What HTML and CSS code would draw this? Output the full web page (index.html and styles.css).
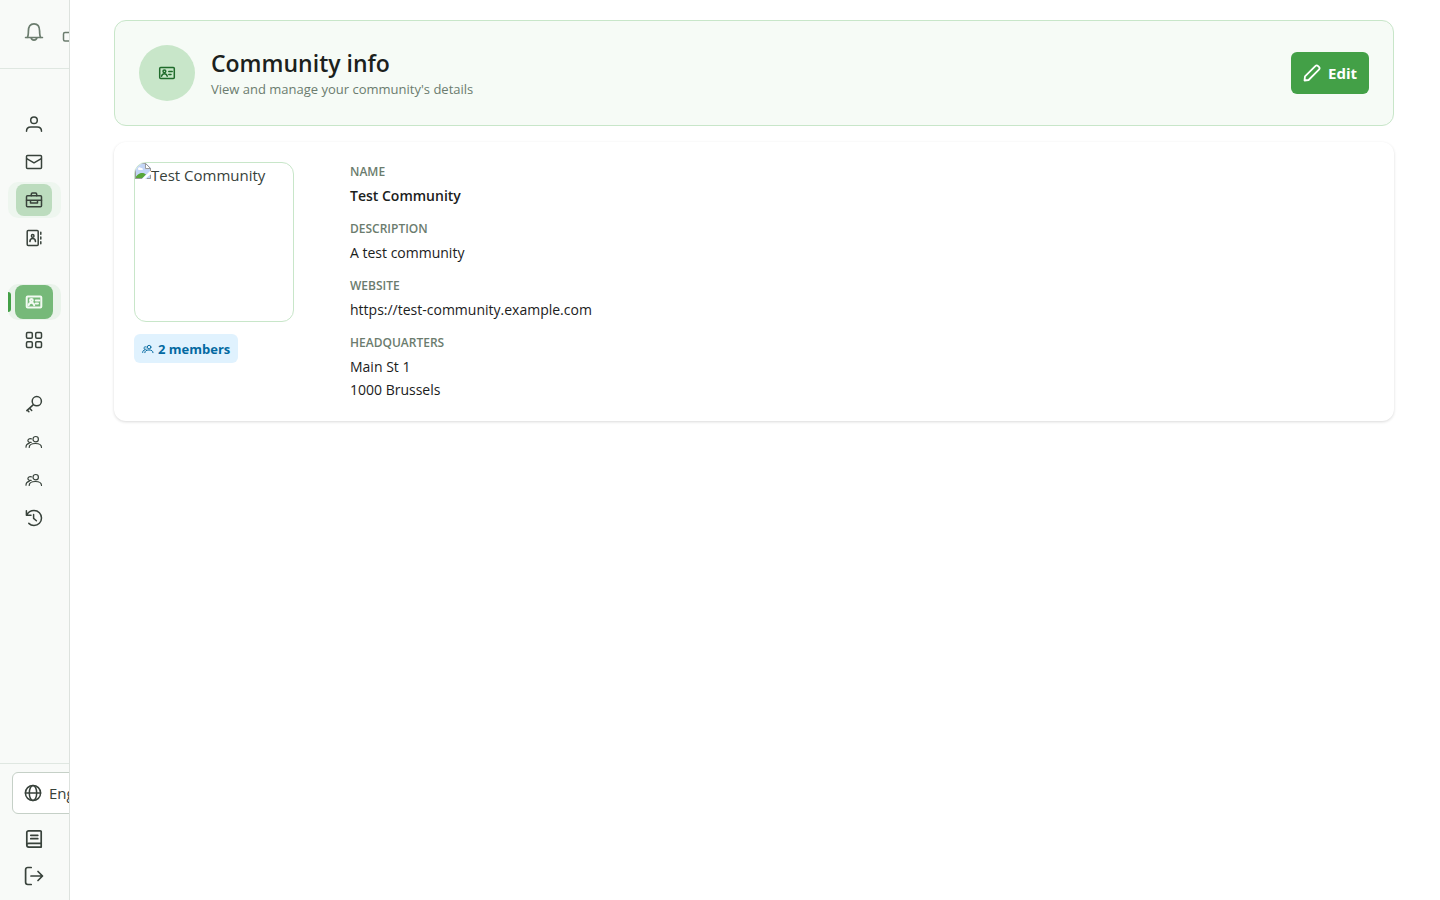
FILE: index.html
```
<!DOCTYPE html>
<html lang="en">

<head>
    <meta charset="UTF-8">
    <meta name="viewport" content="width=device-width, initial-scale=1.0">
    <title>Community info</title>
    <link rel="stylesheet" href="styles.css">
</head>

<body>
    <!-- Shared icon shapes -->
    <svg class="sprite" aria-hidden="true">
        <symbol id="id-card" viewBox="0 0 18 18">
            <rect x="1.7" y="3.5" width="14.6" height="11" rx="1" />
            <circle cx="6.4" cy="7.3" r="1.4" />
            <path d="M3.6 12.2c.4-1.7 1.3-2.5 2.8-2.5s2.4.8 2.8 2.5M10.8 7.5h3.4M10.8 10.5H13" />
        </symbol>
        <symbol id="users" viewBox="0 0 18 18">
            <circle cx="10.7" cy="6.2" r="2.7" />
            <path d="M4.2 14.5c0-2.6 2.3-4 6.2-4s6.100 1.400 6.100 4M6.400 5.900c-2-.6-3.500.3-3.500 1.700s1.500 2.200 3.300 1.700M1 14.200c0-2.200 1-3.500 3.200-3.900" />
        </symbol>
    </svg>

    <div class="app">
        <aside class="sidebar">
            <div class="sidebar-header">
                <button type="button" class="icon-button" aria-label="Notifications">
                    <svg class="icon bell" viewBox="0 0 20 20">
                        <path d="M1.600 15.500h16.800M3.200 15.500c1-1.200 1.200-2.800 1.200-6.500C4.400 4.500 6.200 1.900 10 1.900s5.600 2.600 5.600 7.100c0 3.700.2 5.300 1.200 6.500M7 15.700c.3 1.700 1.500 2.400 3 2.400s2.700-.7 3-2.400" />
                    </svg>
                </button>
                <button type="button" class="icon-button pin" aria-label="Keep menu open">
                    <svg class="icon" viewBox="0 0 18 18">
                        <rect x="1.500" y="4.5" width="12" height="8.5" rx="1.5" />
                    </svg>
                </button>
            </div>

            <nav class="sidebar-nav" aria-label="Main">
                <div class="nav-group">
                    <a href="#" class="nav-link" aria-label="Profile"><span class="nav-icon">
                        <svg class="icon" viewBox="0 0 18 18">
                            <circle cx="9" cy="5.2" r="3.3" />
                            <path d="M1.5 16.3c0-3 1.6-4.3 4.3-4.3h6.4c2.7 0 4.3 1.3 4.3 4.3" />
                        </svg></span></a>
                    <a href="#" class="nav-link" aria-label="Messages"><span class="nav-icon">
                        <svg class="icon" viewBox="0 0 18 18">
                            <rect x="1.5" y="2.5" width="15" height="13" rx="1" />
                            <path d="M1.7 5.6L9 9.8l7.3-4.2" />
                        </svg></span></a>
                    <a href="#" class="nav-link selected" aria-label="Work"><span class="nav-icon">
                        <svg class="icon" viewBox="0 0 18 18">
                            <rect x="1.5" y="4.7" width="15" height="11" rx="1" />
                            <path d="M6.3 4.7V3.2c0-.7.4-1.1 1.1-1.1h3.2c.7 0 1.1.4 1.1 1.1v1.5M1.5 9.3h15M5.5 9.3v2.6h7V9.3" />
                        </svg></span></a>
                    <a href="#" class="nav-link" aria-label="Contacts"><span class="nav-icon">
                        <svg class="icon" viewBox="0 0 18 18">
                            <rect x="2.2" y="1.5" width="11" height="15" rx="1" />
                            <circle cx="7.7" cy="6.9" r="1.3" />
                            <path d="M4.9 12.6c.1-2 1.1-3 2.8-3s2.7 1 2.8 3M15.8 3.3v2M15.8 8v2M15.8 12.7v2" />
                        </svg></span></a>
                </div>
                <div class="nav-group">
                    <a href="#" class="nav-link active" aria-label="Community info" aria-current="page"><span class="nav-icon">
                        <svg class="icon"><use href="#id-card" /></svg></span></a>
                    <a href="#" class="nav-link" aria-label="Modules"><span class="nav-icon">
                        <svg class="icon" viewBox="0 0 18 18">
                            <rect x="1.5" y="1.5" width="5.8" height="5.8" rx="1.2" />
                            <rect x="10.7" y="1.5" width="5.8" height="5.8" rx="1.2" />
                            <rect x="1.5" y="10.7" width="5.8" height="5.8" rx="1.2" />
                            <rect x="10.7" y="10.7" width="5.8" height="5.8" rx="1.2" />
                        </svg></span></a>
                </div>
                <div class="nav-group">
                    <a href="#" class="nav-link" aria-label="Access keys"><span class="nav-icon">
                        <svg class="icon" viewBox="0 0 18 18">
                            <circle cx="11.8" cy="6.2" r="4.6" />
                            <path d="M8.4 9.6L1.8 15.6M4.6 13.2l2.1 2.2M2.4 15.2l1.5 1.5" />
                        </svg></span></a>
                    <a href="#" class="nav-link" aria-label="Members"><span class="nav-icon">
                        <svg class="icon thin"><use href="#users" /></svg></span></a>
                    <a href="#" class="nav-link" aria-label="Groups"><span class="nav-icon">
                        <svg class="icon thin"><use href="#users" /></svg></span></a>
                    <a href="#" class="nav-link" aria-label="History"><span class="nav-icon">
                        <svg class="icon" viewBox="0 0 18 18">
                            <path d="M1.4 1.8v4.4h4.6M1.8 5.8C3.2 3.1 5.8 1.5 9 1.5c4.4 0 7.5 3.3 7.5 7.5s-3.1 7.5-7.5 7.5c-2.2 0-3.9-.8-5.2-2.1M8.6 5.6v3.8l2.8 2.4" />
                        </svg></span></a>
                </div>
            </nav>

            <div class="sidebar-footer">
                <button type="button" class="language">
                    <svg class="icon" viewBox="0 0 18 18">
                        <circle cx="9" cy="9" r="7.6" />
                        <ellipse cx="9" cy="9" rx="3.7" ry="7.6" />
                        <path d="M1.4 9h15.2" />
                    </svg>
                    <span>English</span>
                </button>
                <a href="#" class="footer-link" aria-label="Documentation">
                    <svg class="icon large" viewBox="0 0 20 20">
                        <path d="M17.2 14.3V2.8c0-.6-.4-1-1-1H4.6c-1 0-1.8.8-1.8 1.8v12.5c0 1.2.8 2 2 2h12.4v-3.8H4.6c-1 0-1.8.7-1.8 1.7M6.8 6.3h7M6.8 9.7h7" />
                    </svg>
                </a>
                <a href="#" class="footer-link" aria-label="Log out">
                    <svg class="icon large" viewBox="0 0 20 20">
                        <path d="M7.2 1.5H3.8c-1.3 0-2.2.9-2.2 2.2v12.6c0 1.3.9 2.2 2.2 2.2h3.4M7 10h11.4M14 5.5l4.5 4.5-4.5 4.5" />
                    </svg>
                </a>
            </div>
        </aside>

        <main class="content">
            <header class="page-header">
                <div class="page-icon">
                    <svg class="icon"><use href="#id-card" /></svg>
                </div>
                <div class="page-title">
                    <h1>Community info</h1>
                    <p>View and manage your community's details</p>
                </div>
                <button type="button" class="edit-button">
                    <svg class="icon" viewBox="0 0 18 18">
                        <path d="M1.5 16.5l.5-4.1L12.3 2.1c.8-.8 2-.8 2.8 0l.8.8c.8.8.8 2 0 2.8L5.6 16z" />
                    </svg>
                    Edit
                </button>
            </header>

            <section class="card">
                <div class="card-side">
                    <div class="logo" role="img" aria-label="Test Community">
                        <svg class="broken" viewBox="0 0 16 16" aria-hidden="true">
                            <path fill="#c3d5f6" d="M0 0h11l5 5v11H0z" />
                            <path fill="#fff" d="M3 6c0-2 2-2.5 3-1 1.500-.5 2.500 1 1.500 2h-4z" />
                            <path fill="#57a639" d="M0 15.5c1-3 4-5.5 7-5.5 2 0 3 .6 4 1.5l-4 4z" />
                            <path fill="#fff" d="M16 7L7 16h3l6-5z" />
                            <path fill="#fff" stroke="#9a9a9a" d="M10.5.5v5h5z" />
                            <path fill="none" stroke="#9a9a9a" d="M0 .5h11M15.5 5v3M.5 0v15.5H7M12 15.5h3.5V12" />
                        </svg><span>Test Community</span>
                    </div>
                    <span class="badge">
                        <svg class="icon"><use href="#users" /></svg>
                        2 members
                    </span>
                </div>

                <dl class="details">
                    <div>
                        <dt>Name</dt>
                        <dd class="strong">Test Community</dd>
                    </div>
                    <div>
                        <dt>Description</dt>
                        <dd>A test community</dd>
                    </div>
                    <div>
                        <dt>Website</dt>
                        <dd>https://test-community.example.com</dd>
                    </div>
                    <div>
                        <dt>Headquarters</dt>
                        <dd>Main St 1<br>1000 Brussels</dd>
                    </div>
                </dl>
            </section>
        </main>
    </div>
</body>

</html>
```
FILE: styles.css
```
* {
    box-sizing: border-box;
}

body {
    font-family: "Segoe UI", "Open Sans", "Noto Sans", sans-serif;
    font-size: 15px;
    background-color: #fff;
    color: #1b211c;
    margin: 0;
}

h1,
p,
dl,
dd {
    margin: 0;
}

button {
    font: inherit;
    cursor: pointer;
}

.sprite {
    display: none;
}

.icon {
    width: 18px;
    height: 18px;
    flex: none;
    fill: none;
    stroke: currentColor;
    stroke-width: 1.5;
    stroke-linecap: round;
    stroke-linejoin: round;
}

.icon.thin {
    stroke-width: 1.2;
}

.icon.large,
.icon.bell {
    width: 20px;
    height: 20px;
    stroke-width: 1.7;
}

.app {
    display: flex;
    min-height: 100vh;
}

/* Sidebar */

.sidebar {
    display: flex;
    flex-direction: column;
    flex: none;
    width: 70px;
    overflow: hidden;
    background-color: #f8faf8;
    border-right: 1px solid #dde2de;
    color: #38423b;
}

.sidebar-header {
    display: flex;
    align-items: center;
    gap: 18px;
    height: 69px;
    padding: 0 0 4px 24px;
    border-bottom: 1px solid #dfe7e1;
}

.icon-button {
    display: flex;
    padding: 0;
    border: none;
    background: none;
    color: #6b7c6e;
}

.icon-button.pin {
    padding-top: 9px;
}

.sidebar-nav {
    display: flex;
    flex-direction: column;
    flex: 1;
    gap: 28px;
    padding: 37px 8px 0;
}

.nav-group {
    display: flex;
    flex-direction: column;
    gap: 2px;
}

.nav-link {
    position: relative;
    display: flex;
    align-items: center;
    height: 36px;
    padding-left: 8px;
    border-radius: 10px;
    color: inherit;
}

.nav-icon {
    display: flex;
    align-items: center;
    justify-content: center;
    width: 36px;
    height: 32px;
    border-radius: 8px;
}

.nav-link.selected {
    background-color: #eef6ef;
}

.selected .nav-icon {
    background-color: #bcdcbe;
}

.nav-link.active {
    background-color: #eaf3eb;
    padding-left: 7px;
}

.active .nav-icon {
    width: 38px;
    height: 34px;
    background-color: #76b979;
    color: #f2faf2;
}

.active .icon {
    stroke-width: 2;
}

.nav-link.active::before {
    content: "";
    position: absolute;
    left: 0;
    top: 8px;
    width: 3px;
    height: 20px;
    background-color: #43a047;
    border-radius: 0 3px 3px 0;
}

.sidebar-footer {
    display: flex;
    flex-direction: column;
    padding: 8px 0 6px 12px;
    border-top: 1px solid #dfe7e1;
}

.language {
    display: flex;
    align-items: center;
    gap: 7px;
    width: 200px;
    height: 42px;
    margin-bottom: 6px;
    padding: 0 11px;
    background-color: #fff;
    border: 1px solid #c5d0c7;
    border-radius: 6px;
    color: #38423b;
}

.footer-link {
    display: flex;
    align-items: center;
    height: 37px;
    padding-left: 12px;
    color: inherit;
}

/* Page */

.content {
    display: flex;
    flex-direction: column;
    flex: 1;
    gap: 16px;
    min-width: 0;
    padding: 20px 46px 20px 44px;
}

.page-header {
    display: flex;
    align-items: center;
    gap: 16px;
    padding: 24px;
    background-color: #f6fbf6;
    border: 1px solid #c8e6c9;
    border-radius: 12px;
}

.page-icon {
    display: flex;
    align-items: center;
    justify-content: center;
    width: 56px;
    height: 56px;
    border-radius: 50%;
    background-color: #c8e6c9;
    color: #1f6b2b;
}

.page-title {
    flex: 1;
}

.page-title h1 {
    font-size: 23px;
    font-weight: 600;
    line-height: 32px;
}

.page-title p {
    font-size: 13px;
    line-height: 20px;
    color: #6b7c6e;
}

.edit-button {
    display: flex;
    align-items: center;
    gap: 7px;
    height: 42px;
    padding: 0 12px;
    border: none;
    border-radius: 6px;
    background-color: #43a047;
    color: #fff;
    font-weight: 700;
}

.edit-button .icon {
    stroke-width: 1.8;
}

.card {
    display: flex;
    gap: 56px;
    padding: 20px;
    background-color: #fff;
    border-radius: 12px;
    box-shadow: 0 1px 3px rgba(0, 0, 0, 0.15);
}

.card-side {
    display: flex;
    flex-direction: column;
    align-items: flex-start;
    gap: 12px;
}

.logo {
    display: flex;
    align-items: flex-start;
    width: 160px;
    height: 160px;
    overflow: hidden;
    border: 1px solid #c8e6c9;
    border-radius: 12px;
    line-height: 24px;
    color: #38423b;
}

.broken {
    width: 16px;
    height: 16px;
    flex: none;
}

.badge {
    display: flex;
    align-items: center;
    gap: 4px;
    height: 29px;
    padding: 0 8px;
    border-radius: 6px;
    background-color: #e0f2fe;
    color: #0369a1;
    font-size: 13px;
    font-weight: 700;
}

.badge .icon {
    width: 12px;
    height: 12px;
}

.details {
    display: flex;
    flex-direction: column;
    gap: 12px;
    min-width: 0;
}

.details dt {
    margin-bottom: 2px;
    font-size: 12px;
    font-weight: 600;
    line-height: 20px;
    text-transform: uppercase;
    color: #6b7c6e;
}

.details dd {
    font-size: 14px;
    line-height: 23px;
}

.details .strong {
    font-weight: 600;
}
```
